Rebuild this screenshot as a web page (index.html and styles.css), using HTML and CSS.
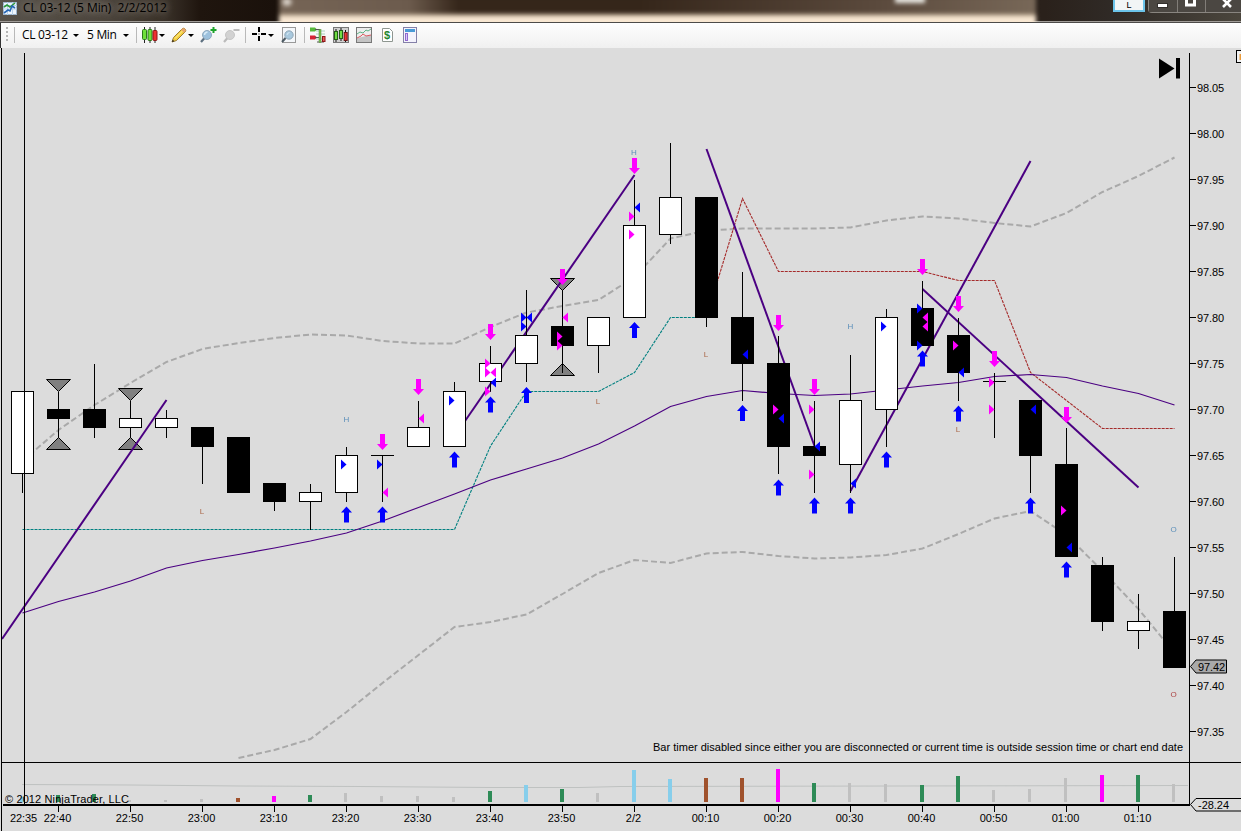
FILE: index.html
```html
<!DOCTYPE html>
<html lang="en">

<head>
    <meta charset="UTF-8">
    <meta name="viewport" content="width=device-width, initial-scale=1.0">
    <title>CL 03-12 (5 Min) 2/2/2012</title>
    <link rel="stylesheet" href="styles.css">
</head>

<body>
    <header class="titlebar">
        <div class="glass"></div>
        <svg class="app-icon" width="14" height="14" viewBox="0 0 14 14">
            <rect x="0.5" y="1.5" width="13" height="12" fill="#eef6ff" stroke="#9fb6cf"/>
            <path d="M0 4.5h14M0 8h14M4.5 1v13M9.500 1v13" stroke="#b9d3ea" fill="none"/>
            <path d="M1 6l3-2 3 2 5-4" stroke="#2c9a3c" stroke-width="1.6" fill="none"/>
            <path d="M1 12l4-3 2 1 2-5 3 2" stroke="#2767b5" stroke-width="1.6" fill="none"/>
        </svg>
        <span class="title">CL 03-12 (5 Min)&nbsp; 2/2/2012</span>
        <div class="window-buttons">
            <span class="link-btn">L</span>
            <div class="win-group">
                <span class="win-btn"><svg width="28" height="12"><rect x="8.500" y="3.500" width="10" height="4" fill="#fff" stroke="#33302d"/></svg></span>
                <span class="win-btn"><svg width="27" height="12"><path d="M8.500 0v5h8v-5" fill="none" stroke="#fff" stroke-width="3"/></svg></span>
                <span class="win-btn close"><svg width="38" height="12"><path d="M17 -1l8 8M25 -1l-8 8" stroke="#fff" stroke-width="2.600"/></svg></span>
            </div>
        </div>
    </header>

    <nav class="toolbar">
        <svg class="grip" width="4" height="16"><path d="M2 0v16" stroke="#b5b5b5" stroke-width="2" stroke-dasharray="2 2"/></svg>
        <i class="sep"></i>
        <span class="label instrument">CL 03-12</span>
        <i class="caret"></i>
        <span class="label interval">5 Min</span>
        <i class="caret"></i>
        <i class="sep sep-style"></i>
        <!-- chart style -->
        <svg class="ic-style" width="16" height="16" viewBox="0 0 16 16">
            <path d="M2.500 0v16M8 0v16M13 0v16" stroke="#222"/>
            <rect x="0.5" y="2.500" width="4" height="10" rx="1" fill="#6fe03a" stroke="#2c7a1a"/>
            <rect x="6" y="2.500" width="4" height="11" rx="1" fill="#6fe03a" stroke="#2c7a1a"/>
            <rect x="11" y="3.500" width="4" height="10" rx="1" fill="#ee3131" stroke="#8d1717"/>
        </svg>
        <i class="caret"></i>
        <!-- drawing tools -->
        <svg class="ic-pencil" width="16" height="16" viewBox="0 0 16 16">
            <path d="M1 15l1.500-4.500L11 2q1.500-1.500 3 0t0 3L5.500 13.500z" fill="#f3cf3c" stroke="#9b7a35"/>
            <path d="M4 11.500L12 3.500" stroke="#fff1a0"/>
            <path d="M11 2q1.500-1.500 3 0t0 3l-1 .8-3-3z" fill="#e8a56c"/>
            <path d="M1 15l.8-2.200 1.500 1.400z" fill="#222"/>
        </svg>
        <i class="caret"></i>
        <!-- zoom in -->
        <svg class="ic-zoom" width="17" height="16" viewBox="0 0 17 16">
            <path d="M4.500 11L1 15" stroke="#5d7080" stroke-width="2.200"/>
            <circle cx="7" cy="8" r="4.500" fill="#9dc1dd" stroke="#8fa9bd"/>
            <path d="M4.500 8q0-2.500 3-3" stroke="#d8ebf7" stroke-width="1.500" fill="none"/>
            <path d="M13.500 0v6M10.500 3h6" stroke="#1da32b" stroke-width="2"/>
        </svg>
        <!-- zoom out -->
        <svg class="ic-zoom out" width="17" height="16" viewBox="0 0 17 16">
            <path d="M4.500 11L1 15" stroke="#bbb" stroke-width="2.200"/>
            <circle cx="7" cy="8" r="4.500" fill="#d2d2d2" stroke="#c6c6c6"/>
            <path d="M10.500 3h6" stroke="#bbb" stroke-width="2"/>
        </svg>
        <i class="sep sep-cross"></i>
        <svg class="ic-cross" width="15" height="15" viewBox="0 0 15 15">
            <path d="M7 0v5M7 9v5M0 7h5M9 7h5" stroke="#000" stroke-width="2"/>
            <rect x="6.500" y="6.500" width="1" height="1"/>
        </svg>
        <i class="caret"></i>
        <!-- data box -->
        <svg class="ic-find" width="16" height="16" viewBox="0 0 16 16">
            <rect x="1.500" y="0.5" width="13" height="15" fill="#f4f7fa" stroke="#999"/>
            <path d="M4.500 11L1 15" stroke="#4d5a64" stroke-width="2"/>
            <circle cx="8" cy="8" r="4.200" fill="#a9c9de" stroke="#91a8b8"/>
            <path d="M6 8q0-2 2.500-2.500" stroke="#d8ebf7" fill="none"/>
        </svg>
        <i class="sep sep-panels"></i>
        <!-- chart trader -->
        <svg class="ic-trader" width="16" height="16" viewBox="0 0 16 16">
            <path d="M6 4h9M6 7h9M6 12h9" stroke="#a9d6bf"/>
            <path d="M0 0.500h5l2 2-2 2h-5z" fill="#56b93c"/>
            <path d="M0 8.500h5l2 2-2 2h-5z" fill="#d62336"/>
            <path d="M5 2.500h5M5 10.500h5M7 15h7" stroke="#555"/>
            <rect x="9" y="2.500" width="2" height="13" fill="#7ac451" stroke="#508436" stroke-width=".5"/>
            <rect x="12.500" y="9.500" width="2.500" height="5" fill="#e65a5a" stroke="#8d1717"/>
        </svg>
        <!-- data series -->
        <svg class="ic-bars" width="16" height="16" viewBox="0 0 16 16">
            <rect x="0.500" y="0.500" width="15" height="15" fill="#d0d0d0" stroke="#777"/>
            <path d="M3 2v13M8 1v13M12.500 3v12" stroke="#111"/>
            <rect x="1.500" y="4.500" width="3" height="8" fill="#70dd44" stroke="#246016"/>
            <rect x="6.500" y="3.500" width="3" height="8" fill="#70dd44" stroke="#246016"/>
            <rect x="11.200" y="5.500" width="3" height="8" fill="#e33" stroke="#701515"/>
        </svg>
        <!-- indicators -->
        <svg class="ic-ind" width="16" height="16" viewBox="0 0 16 16">
            <rect x="0.500" y="0.500" width="15" height="15" fill="#c4c4c4" stroke="#777"/>
            <path d="M1 1h14v7l-9 2-5 1z" fill="#ededed"/>
            <path d="M1 7l3-2 3 1 3-3 2 1 3-2" stroke="#5fb386" fill="none"/>
            <path d="M1 11l4-2 2-2 3 2 5-1" stroke="#dd5a62" fill="none"/>
        </svg>
        <!-- strategies -->
        <svg class="ic-strat" width="13" height="16" viewBox="0 0 13 16">
            <path d="M1.500 1.500h7l3 3v10h-10z" fill="#fff" stroke="#8e9690"/>
            <text x="3" y="12" class="dollar">$</text>
        </svg>
        <!-- properties -->
        <svg class="ic-props" width="14" height="16" viewBox="0 0 14 16">
            <rect x="0.500" y="0.500" width="13" height="15" fill="#f4f3fc" stroke="#8480a8"/>
            <path d="M2 3.500h10" stroke="#4a9ad6" stroke-width="3"/>
            <rect x="2.500" y="6.500" width="2" height="7" fill="#d9c9f6" stroke="#9168cf"/>
        </svg>
    </nav>

    <main class="chart">
        <svg id="plot" width="1241" height="783" viewBox="0 48 1241 783"></svg>
    </main>

    <script src="chart.js"></script>
</body>

</html>
```

FILE: styles.css
```css
body {
    margin: 0;
    background-color: #dcdcdc;
    font-family: "Open Sans", "Noto Sans", sans-serif;
    overflow: hidden;
}

/* Title bar */
.titlebar {
    position: relative;
    display: flex;
    align-items: flex-start;
    box-sizing: border-box;
    height: 23px;
    overflow: hidden;
    background: linear-gradient(to right, #57524b 0, #4c453e 100px, #393129 165px, #1f150e 200px, #1a110b 275px, #2a211b 1045px, #302b27 1120px, #4b463d 1241px);
    border-bottom: 1px solid #4d4b49;
    box-shadow: inset 0 -1px 0 #a19d99;
}

/* Blurred window showing through the glass */
.glass {
    position: absolute;
    left: 279px;
    top: -4px;
    width: 757px;
    height: 30px;
    filter: blur(2px);
    background:
        radial-gradient(ellipse 6px 5px at 8px 6px, #ddd5cc 50%, transparent),
        linear-gradient(#e8e6e0, #e8e6e0) 616px 0 / 30px 7px no-repeat,
        linear-gradient(to bottom, transparent 17px, #bba991 19px, #f9e8d3 21px),
        linear-gradient(to right, #766556 0, #6c5b4d 130px, #35261a 180px, #35261a 360px, #5b4a3d 600px, #786858 757px);
}

.app-icon {
    position: relative;
    margin: 1px 0 0 3px;
}

.title {
    position: relative;
    margin-left: 6px;
    font-size: 12px;
    line-height: 15px;
    letter-spacing: -0.08px;
    color: #000;
    white-space: nowrap;
    text-shadow: 0 0 7px #948d84, 0 0 9px #8b857c;
}

.window-buttons {
    position: relative;
    display: flex;
    margin-left: auto;
}

.link-btn {
    width: 28px;
    height: 10px;
    margin-right: 3px;
    border: 2px solid #6cc4ea;
    border-top: 0;
    background-color: #f2f5f6;
    font-family: "Liberation Sans", Arial, sans-serif;
    font-size: 9px;
    line-height: 10px;
    text-align: center;
}

.win-group {
    display: flex;
    height: 12px;
    border: 1px solid #898580;
    border-top: 0;
    border-right: 0;
    border-bottom-left-radius: 4px;
}

.win-btn {
    height: 12px;
    overflow: hidden;
    border-right: 1px solid #817d78;
    background-color: #4b4742;
}

.win-btn.close {
    width: 35px;
    border-right: 0;
}

.win-btn svg {
    display: block;
}

/* Toolbar */
.toolbar {
    display: flex;
    align-items: center;
    box-sizing: border-box;
    height: 25px;
    padding: 0 0 2px 4px;
    background: linear-gradient(#fefefe, #f0f0f0);
    border-left: 1px solid #333;
}

.toolbar > * {
    flex: none;
}

.sep {
    width: 1px;
    height: 16px;
    margin-left: 5px;
    background-color: #b9b9b9;
}

.caret {
    width: 0;
    height: 0;
    margin-top: 2px;
    border: 3px solid transparent;
    border-top-color: #000;
    border-bottom: 0;
}

.label {
    font-size: 12px;
    line-height: 16px;
    letter-spacing: -0.3px;
    white-space: nowrap;
}

.instrument {
    width: 51px;
    margin-left: 7px;
}

.interval {
    width: 36px;
    margin-left: 8px;
}

.sep-style {
    margin-left: 7px;
}

.ic-style {
    margin: 0 1px 0 5px;
}

.ic-pencil {
    margin: 0 1px 0 6px;
}

.ic-zoom {
    margin-left: 6px;
}

.sep-cross {
    margin-left: 5px;
}

.ic-cross {
    margin: 0 1px 0 6px;
}

.ic-find {
    margin-left: 7px;
}

.sep-panels {
    margin-left: 7px;
}

.ic-trader {
    margin-left: 5px;
}

.ic-bars,
.ic-ind {
    margin-left: 7px;
}

.ic-strat {
    margin-left: 9px;
}

.ic-props {
    margin-left: 9px;
}

.dollar {
    font: bold 11px "Liberation Sans", sans-serif;
    fill: #23862c;
}

/* Chart */
.chart svg {
    display: block;
}

.axis-text,
.note {
    font-family: "Liberation Sans", Arial, sans-serif;
    font-size: 11px;
    fill: #000;
}

.mark {
    font-family: "Liberation Sans", Arial, sans-serif;
    font-size: 8px;
    text-anchor: middle;
    opacity: 0.85;
}

.axis {
    stroke: #000;
    shape-rendering: crispEdges;
}

.candle {
    stroke: #000;
    shape-rendering: crispEdges;
}

.up {
    fill: #fff;
}

.down {
    fill: #000;
}

.volume {
    shape-rendering: crispEdges;
}

.band,
.average,
.stop,
.trend,
.vol-average {
    fill: none;
}

.band {
    stroke: #a9a9a9;
    stroke-width: 2;
    stroke-dasharray: 6 3;
}

.average {
    stroke: #4b0082;
    stroke-width: 1.2;
}

.stop {
    stroke-width: 1.1;
    stroke-dasharray: 3 1;
}

.trend {
    stroke: #4b0082;
    stroke-width: 2;
}

.vol-average {
    stroke: #bfc2c1;
}

.swing {
    fill: #808080;
    stroke: #000;
}
```

FILE: chart.js
```javascript
const plot = document.getElementById('plot');

const MAGENTA = '#ff00ff';
const BLUE = '#0000ff';
const GREEN = '#2e8b57';
const SKY = '#87ceeb';
const SIENNA = '#a0522d';
const GRAY = '#c0c0c0';

function add(tag, attrs, text) {
    const el = document.createElementNS('http://www.w3.org/2000/svg', tag);
    for (const key in attrs) el.setAttribute(key, attrs[key]);
    if (text !== undefined) el.textContent = text;
    plot.appendChild(el);
    return el;
}

const barX = i => 22.5 + 36 * i;
const priceY = p => Math.round(87 + (98.05 - p) * 920) + 0.5;
const line = (x1, y1, x2, y2, cls) => add('line', { x1, y1, x2, y2, class: cls });

// One value per bar, starting at bar `first`
function series(first, values, cls, color) {
    const points = values.map((v, i) => barX(first + i) + ',' + v).join(' ');
    const el = add('polyline', { points, class: cls });
    if (color) el.style.stroke = color;
}

// Bollinger bands
series(0, [461, 430, 405, 383, 362, 349, 343, 338, 334.5, 335.5, 341, 343.5, 343.5, 327, 312.5, 306, 300, 277, 238.5, 230.5,
    228.5, 228.5, 228.5, 227.5, 220.5, 216.5, 218.5, 223, 226.5, 213, 192, 176, 157.5], 'band');
series(6, [758, 750, 739, 712, 683, 655, 627, 622, 614.5, 594, 573, 560, 563, 553.5, 552, 556, 558.5, 557.5, 555, 548.5,
    534, 518.5, 511, 535, 571, 609, 653], 'band');

// Stops
series(0, [529.5, 529.5, 529.5, 529.5, 529.5, 529.5, 529.5, 529.5, 529.5, 529.5, 529.5, 529.5, 529.5, 446, 391.5, 391.5, 391.5,
    372.5, 317.5, 317.5], 'stop', '#008080');
series(19, [317.5, 198.5, 271.5, 271.5, 271.5, 271.5, 271.5, 280.5, 280.5, 372.5, 400.5, 428.5, 428.5, 428.5], 'stop', '#a52a2a');

// Moving average
series(0, [613, 601.5, 592, 581, 568, 560.5, 554.5, 548, 541, 533, 521, 507.5, 494, 480, 469, 458, 444, 426, 406.5, 396.5,
    390.5, 393.5, 395.5, 394, 390, 386, 382.5, 376.5, 374.5, 377.5, 386, 393.5, 405], 'average');

// Swing triangles: bar, upper base, lower base
[[1, 379.5, 449.5], [3, 388.5, 449.5], [15, 278.5, 375.5]].forEach(([i, top, bottom]) => {
    const x = barX(i);
    add('path', { d: `M${x - 12} ${top}h24l-12 12z`, class: 'swing' });
    add('path', { d: `M${x - 12} ${bottom}h24l-12 -12z`, class: 'swing' });
});

// Trend lines
[[2, 639, 166.5, 400], [454, 437, 634.5, 175], [706.5, 149, 814.5, 446], [850.5, 491, 1030.5, 161], [922.5, 289, 1138.5, 487.5]]
    .forEach(([x1, y1, x2, y2]) => line(x1, y1, x2, y2, 'trend'));

// Body top, body bottom, high, low, direction
const candles = [
    [97.72, 97.63, 97.72, 97.61, 'up'],
    [97.70, 97.69, 97.72, 97.67, 'down'],
    [97.70, 97.68, 97.75, 97.67, 'down'],
    [97.69, 97.68, 97.71, 97.67, 'up'],
    [97.69, 97.68, 97.70, 97.67, 'up'],
    [97.68, 97.66, 97.68, 97.62, 'down'],
    [97.67, 97.61, 97.67, 97.61, 'down'],
    [97.62, 97.60, 97.62, 97.59, 'down'],
    [97.61, 97.60, 97.62, 97.57, 'up'],
    [97.65, 97.61, 97.66, 97.60, 'up'],
    [97.65, 97.65, 97.65, 97.60, 'up'],
    [97.68, 97.66, 97.71, 97.66, 'up'],
    [97.72, 97.66, 97.73, 97.66, 'up'],
    [97.75, 97.73, 97.77, 97.72, 'up'],
    [97.78, 97.75, 97.83, 97.73, 'up'],
    [97.79, 97.77, 97.83, 97.74, 'down'],
    [97.80, 97.77, 97.80, 97.74, 'up'],
    [97.90, 97.80, 97.95, 97.80, 'up'],
    [97.93, 97.89, 97.99, 97.88, 'up'],
    [97.93, 97.80, 97.93, 97.79, 'down'],
    [97.80, 97.75, 97.85, 97.71, 'down'],
    [97.75, 97.66, 97.78, 97.63, 'down'],
    [97.66, 97.65, 97.71, 97.61, 'down'],
    [97.71, 97.64, 97.76, 97.61, 'up'],
    [97.80, 97.70, 97.81, 97.66, 'up'],
    [97.81, 97.77, 97.84, 97.77, 'down'],
    [97.78, 97.74, 97.80, 97.71, 'down'],
    [97.73, 97.73, 97.74, 97.67, 'up'],
    [97.71, 97.65, 97.71, 97.61, 'down'],
    [97.64, 97.54, 97.68, 97.54, 'down'],
    [97.53, 97.47, 97.54, 97.46, 'down'],
    [97.47, 97.46, 97.50, 97.44, 'up'],
    [97.48, 97.42, 97.54, 97.42, 'down']
];

candles.forEach(([top, bottom, high, low, dir], i) => {
    const x = barX(i);
    line(x, priceY(high), x, priceY(low), 'candle');
    if (top === bottom) {
        line(x - 11.5, priceY(top), x + 11.5, priceY(top), 'candle');
    } else {
        add('rect', { x: x - 11, y: priceY(top), width: 22, height: priceY(bottom) - priceY(top), class: 'candle ' + dir });
    }
});

// Entry arrows: bar, top
[[10, 434], [11, 379], [13, 324], [15, 269], [17, 158], [21, 315], [22, 379], [25, 259], [26, 296], [27, 351], [29, 407]]
    .forEach(([i, y]) => add('path', { d: `M${barX(i) - 2.5} ${y}h5v10h3l-5.500 6l-5.500 -6h3z`, fill: MAGENTA }));
[[9, 506.5], [10, 506.5], [12, 451.5], [13, 396.5], [14, 387], [17, 322], [20, 405], [21, 479.5], [22, 497.5], [23, 497.5],
    [24, 451.5], [25, 350.5], [26, 405.5], [28, 497.5], [29, 561.5]]
    .forEach(([i, y]) => add('path', { d: `M${barX(i)} ${y}l5.500 6h-3v10h-5v-10h-3z`, fill: BLUE }));

// Execution markers: bar, side, colour, y
[[9, 'R', BLUE, 464.5], [10, 'R', BLUE, 464.5], [10, 'L', MAGENTA, 492.5], [11, 'L', MAGENTA, 418.5], [12, 'R', BLUE, 400.5],
    [13, 'R', MAGENTA, 363.5], [13, 'R', MAGENTA, 372.5], [13, 'L', MAGENTA, 372.5], [13, 'L', BLUE, 382.5], [13, 'R', MAGENTA, 391.5],
    [14, 'R', BLUE, 317.5], [14, 'L', BLUE, 317.5], [14, 'R', BLUE, 326.5],
    [15, 'L', MAGENTA, 317.5], [15, 'R', MAGENTA, 336.5], [15, 'R', MAGENTA, 345.5],
    [17, 'L', BLUE, 207.5], [17, 'R', MAGENTA, 216.5], [17, 'R', MAGENTA, 234.5],
    [20, 'L', BLUE, 354.5], [21, 'R', MAGENTA, 409.5], [21, 'L', BLUE, 418.5],
    [22, 'R', MAGENTA, 409.5], [22, 'L', BLUE, 446.5], [22, 'R', MAGENTA, 474.5],
    [23, 'L', BLUE, 483.5], [24, 'R', BLUE, 326.5],
    [25, 'R', BLUE, 308.5], [25, 'L', MAGENTA, 317.5], [25, 'L', MAGENTA, 326.5], [25, 'R', BLUE, 345.5],
    [26, 'R', MAGENTA, 345.5], [26, 'L', BLUE, 372.5], [27, 'R', MAGENTA, 382.5], [27, 'R', MAGENTA, 409.5],
    [28, 'L', BLUE, 409.5], [29, 'R', MAGENTA, 510.5], [29, 'L', BLUE, 547.5]
].forEach(([i, side, fill, y]) => {
    const x = barX(i);
    add('path', { d: side === 'R' ? `M${x - 5.5} ${y - 5}l5.500 5l-5.500 5z` : `M${x + 5.5} ${y - 5}l-5.500 5l5.500 5z`, fill });
});

// Swing letters
[['H', 634, 155, '#4682b4'], ['H', 346.5, 421.5, '#4682b4'], ['H', 850.5, 329, '#4682b4'],
    ['L', 202, 513.5, '#a0522d'], ['L', 598, 403.5, '#a0522d'], ['L', 706, 357, '#a0522d'], ['L', 958, 431.5, '#a0522d'],
    ['O', 1173.5, 532, '#4682b4'], ['O', 1173.5, 697, '#a52a2a']]
    .forEach(([t, x, y, fill]) => add('text', { x, y, fill, class: 'mark' }, t));

// Volume panel: top of bar, colour
const volume = [
    [797, SKY], [795, GREEN], [794, GREEN], [800, GRAY], [800, GRAY], [799, GRAY], [798, SIENNA], [796, MAGENTA], [795, GREEN],
    [793, GRAY], [796, GRAY], [796, GRAY], [797, GRAY], [791, GREEN], [785, SKY], [789, GREEN], [793, GRAY], [770, SKY],
    [779, SKY], [778, SIENNA], [778, SIENNA], [769, MAGENTA], [783, GREEN], [783, GRAY], [784, GRAY], [785, GREEN],
    [776, GREEN], [790, GRAY], [789, GRAY], [778, GRAY], [775, MAGENTA], [775, GREEN], [784, GRAY]
];
add('polyline', { points: '22,784.5 130,785 240,786 360,786.500 490,787.500 580,787.500 620,786.500 900,786 1188,785.500', class: 'vol-average' });
volume.forEach(([y, fill], i) => {
    add('rect', { x: barX(i) - 2.5, y, width: fill === GRAY ? 3 : 4, height: 802 - y, fill, class: 'volume' });
});

// Frame
line(1.5, 48, 1.5, 831, 'axis');
line(24.5, 53, 24.5, 804, 'axis');
line(1189.5, 53, 1189.5, 806, 'axis');
line(2, 762.5, 1241, 762.5, 'axis');
add('rect', { x: 3, y: 804, width: 1187, height: 2 });

for (let i = 0; i < 15; i++) {
    const y = priceY(98.05 - i * 0.05);
    line(1190, y, 1196, y, 'axis');
    add('text', { x: 1197, y: y + 4.5, class: 'axis-text', textLength: 27 }, (98.05 - i * 0.05).toFixed(2));
}

add('text', { x: 10, y: 822, class: 'axis-text', textLength: 27 }, '22:35');
['22:40', '22:50', '23:00', '23:10', '23:20', '23:30', '23:40', '23:50', '2/2', '00:10', '00:20', '00:30', '00:40', '00:50', '01:00', '01:10']
    .forEach((t, i) => {
        const x = 58.5 + 72 * i;
        line(x, 806, x, 812, 'axis');
        add('text', { x: x - 1, y: 822, class: 'axis-text', 'text-anchor': 'middle' }, t);
    });

// Price tags
add('path', { d: 'M1190.500 666.500l5.500 -6.500h30.500v13h-30.500z', fill: '#a9a9a9', stroke: '#000' });
add('text', { x: 1198, y: 671, class: 'axis-text', textLength: 27 }, '97.42');
add('path', { d: 'M1243 798.500h-47l-5.500 6l5.500 6.500h47', fill: '#dcdcdc', stroke: '#000' });
add('text', { x: 1198, y: 809, class: 'axis-text', textLength: 31 }, '-28.24');

add('text', { x: 653, y: 751, class: 'note', textLength: 530 },
    'Bar timer disabled since either you are disconnected or current time is outside session time or chart end date');
add('text', { x: 5, y: 803, class: 'axis-text', textLength: 124 }, '© 2012 NinjaTrader, LLC');

// Jump to last bar, panel toggle
add('path', { d: 'M1159 58.500l15.500 10l-15.500 10z' });
add('rect', { x: 1176, y: 58, width: 4, height: 20.5 });
add('rect', { x: 1236.5, y: 50.5, width: 8, height: 12, fill: '#f2f2f2', stroke: '#000' });
add('rect', { x: 1239.5, y: 54, width: 2, height: 6, fill: '#e99b3c' });
```
